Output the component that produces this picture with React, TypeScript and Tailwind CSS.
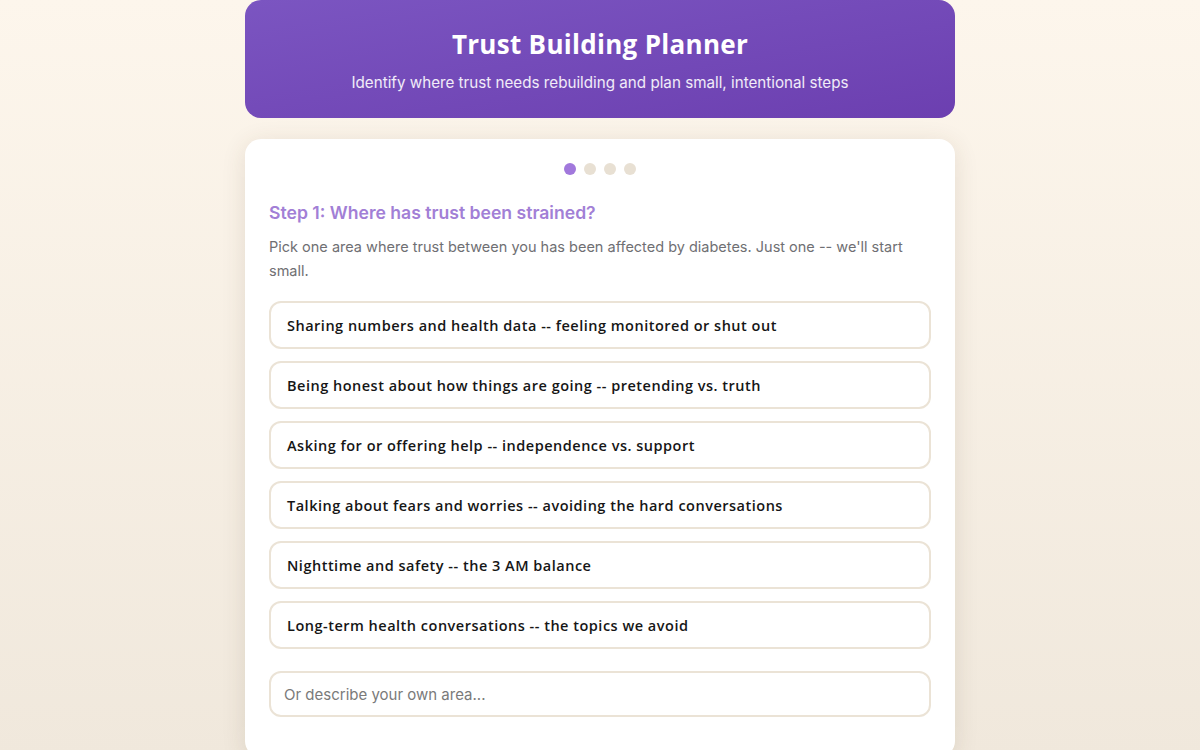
const options = [
  'Sharing numbers and health data -- feeling monitored or shut out',
  'Being honest about how things are going -- pretending vs. truth',
  'Asking for or offering help -- independence vs. support',
  'Talking about fears and worries -- avoiding the hard conversations',
  'Nighttime and safety -- the 3 AM balance',
  'Long-term health conversations -- the topics we avoid',
];

export default function App() {
  return (
    <div className="min-h-screen bg-gradient-to-b from-[#fdf6ec] to-[#f0e8dc] font-['Inter',sans-serif]">
      <div className="mx-auto w-[710px] flex flex-col gap-[21px]">
        <header className="rounded-2xl bg-gradient-to-br from-[#7b55c1] to-[#6c3fb0] pt-7 pb-6 text-center text-white">
          <h1 className="font-['Open_Sans',sans-serif] text-[26px] font-bold leading-8 tracking-[0.3px]">Trust Building Planner</h1>
          <p className="mt-3 text-[15.2px] leading-[22px] text-white/90">Identify where trust needs rebuilding and plan small, intentional steps</p>
        </header>

        <main className="rounded-2xl bg-white px-6 pt-6 pb-10 shadow-[0_4px_24px_rgba(80,60,30,0.12)]">
          <div className="flex justify-center gap-2">
            <span className="h-3 w-3 rounded-full bg-[#a178dc]" />
            <span className="h-3 w-3 rounded-full bg-[#e8e0d3]" />
            <span className="h-3 w-3 rounded-full bg-[#e8e0d3]" />
            <span className="h-3 w-3 rounded-full bg-[#e8e0d3]" />
          </div>

          <h2 className="mt-[25px] text-[17.6px] font-semibold text-[#a27fd6]">Step 1: Where has trust been strained?</h2>
          <p className="mt-[9px] text-[14.5px] leading-6 text-[#6f6f73]">
            Pick one area where trust between you has been affected by diabetes. Just one -- we'll start small.
          </p>

          <div className="mt-[18px] flex flex-col gap-3">
            {options.map((o) => (
              <button
                key={o}
                className="h-12 rounded-xl border-2 border-[#ebe3d6] bg-white px-4 text-left font-['Open_Sans',sans-serif] text-[14.5px] font-semibold tracking-[0.5px] text-[#161616]"
              >
                {o}
              </button>
            ))}
          </div>

          <input
            placeholder="Or describe your own area..."
            className="mt-[22px] h-[46px] w-full rounded-xl border-2 border-[#ebe3d6] px-[13px] text-[15px] text-[#333] placeholder:text-[#7a7a7a] outline-none"
          />
        </main>
      </div>
    </div>
  );
}
